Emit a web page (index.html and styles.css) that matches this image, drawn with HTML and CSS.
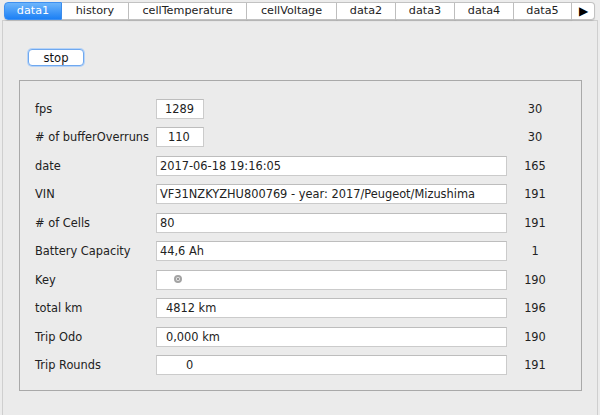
FILE: index.html
```html
<!DOCTYPE html>
<html>
<head>
  <title>data1</title>
  <link rel="stylesheet" href="styles.css">
</head>
<body>
  <div class="tabs">
    <div class="tab selected w58">data1</div>
    <div class="tab w67">history</div>
    <div class="tab w118">cellTemperature</div>
    <div class="tab w90">cellVoltage</div>
    <div class="tab w59">data2</div>
    <div class="tab w59">data3</div>
    <div class="tab w59">data4</div>
    <div class="tab w58">data5</div>
    <div class="tab arrow">&#9654;</div>
  </div>

  <div class="pane">
    <button class="stop">stop</button>

    <div class="box">
      <div class="label">fps</div>
      <div class="field short pad8">1289</div>
      <div class="num">30</div>

      <div class="label"># of bufferOverruns</div>
      <div class="field short pad11">110</div>
      <div class="num">30</div>

      <div class="label">date</div>
      <div class="field">2017-06-18 19:16:05</div>
      <div class="num">165</div>

      <div class="label">VIN</div>
      <div class="field">VF31NZKYZHU800769 - year: 2017/Peugeot/Mizushima</div>
      <div class="num">191</div>

      <div class="label"># of Cells</div>
      <div class="field">80</div>
      <div class="num">191</div>

      <div class="label">Battery Capacity</div>
      <div class="field">44,6 Ah</div>
      <div class="num">1</div>

      <div class="label">Key</div>
      <div class="field pad20"><span class="key"></span></div>
      <div class="num">190</div>

      <div class="label">total km</div>
      <div class="field pad9">4812 km</div>
      <div class="num">196</div>

      <div class="label">Trip Odo</div>
      <div class="field pad9">0,000 km</div>
      <div class="num">190</div>

      <div class="label">Trip Rounds</div>
      <div class="field pad29">0</div>
      <div class="num">191</div>
    </div>
  </div>
</body>
</html>
```

FILE: styles.css
```css
body {
  margin: 0;
  background-color: #ececec;
  font-family: "DejaVu Sans", sans-serif;
  font-size: 11.4px;
  color: #222;
  overflow: hidden;
}
.tabs {
  display: flex;
  position: relative;
  z-index: 1;
  margin: 2px 0 0 4px;
  height: 18px;
}
.tab {
  box-sizing: border-box;
  height: 18px;
  line-height: 16px;
  text-align: center;
  background-color: #fff;
  border: 1px solid #c2c2c2;
  border-left: none;
  box-shadow: 0 1px 1px rgba(0, 0, 0, 0.12);
  font-size: 11.2px;
}
.tab.selected {
  border: 1px solid #3d8ff0;
  border-radius: 4px 0 0 4px;
  background: linear-gradient(#6db5fb, #1c80f5);
  color: #fff;
}
.tab.arrow {
  width: 23px;
  border-radius: 0 4px 4px 0;
  font-size: 12px;
  color: #000;
  text-align: left;
  padding-left: 7px;
}
.w58 { width: 58px; }
.w59 { width: 59px; }
.w67 { width: 67px; }
.w90 { width: 90px; }
.w118 { width: 118px; }
.pane {
  box-sizing: border-box;
  margin: 0 2px 0 2px;
  height: 395px;
  border: 1px solid #cfcfcf;
  border-bottom: none;
  background-color: #ebebeb;
  padding: 28px 0 0 16px;
}
.stop {
  display: block;
  margin-left: 9px;
  width: 56px;
  height: 17px;
  padding: 0;
  background-color: #fff;
  border: 1px solid #6fa8ef;
  border-radius: 4px;
  box-shadow: 0 0 0 1px #b6d3f7;
  font-family: "DejaVu Sans", sans-serif;
  font-size: 11.6px;
  color: #111;
}
.box {
  margin-top: 14px;
  width: 563px;
  box-sizing: border-box;
  border: 1px solid #a9a9a9;
  padding: 18px 18px 15px 15px;
  display: grid;
  grid-template-columns: 121px 351px 56px;
  grid-auto-rows: 20px;
  row-gap: 8.45px;
  align-items: center;
}
.label {
  white-space: nowrap;
}
.field {
  box-sizing: border-box;
  height: 20px;
  line-height: 18px;
  background-color: #fff;
  border: 1px solid #cbcbcb;
  border-top-color: #bdbdbd;
  padding-left: 3px;
  white-space: nowrap;
  overflow: hidden;
}
.field.short {
  width: 48px;
}
.pad8 { padding-left: 8px; }
.pad9 { padding-left: 9px; }
.pad11 { padding-left: 11px; }
.pad20 { padding-left: 17px; }
.pad29 { padding-left: 29px; }
.num {
  text-align: center;
}
.key {
  display: inline-block;
  vertical-align: middle;
  width: 8px;
  height: 8px;
  box-sizing: border-box;
  border-radius: 50%;
  border: 2px solid #a3a3a3;
  background: radial-gradient(circle, #999 0 1px, #e8e8e8 1.5px);
  margin-top: -2px;
}
```
